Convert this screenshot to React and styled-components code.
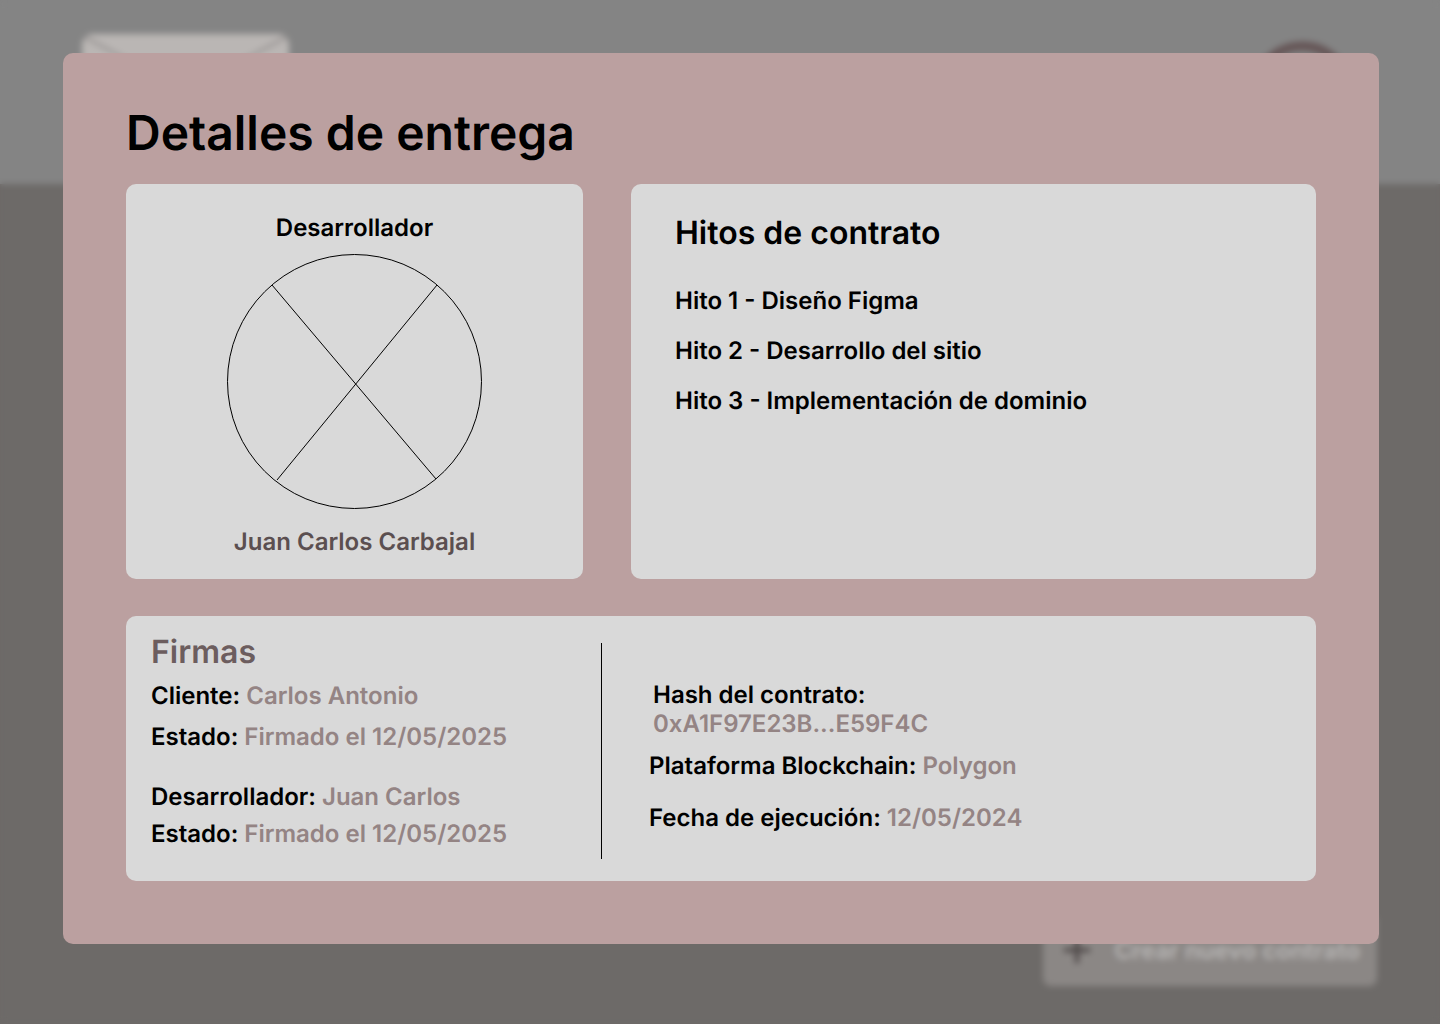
import React from "react";
import styled, { createGlobalStyle } from "styled-components";

const GlobalStyle = createGlobalStyle`
  *, *::before, *::after {
    box-sizing: border-box;
  }
  body {
    margin: 0;
    background: #6d6a68;
    color: #000;
    font-family: Inter, "Liberation Sans", sans-serif;
    font-size: 24px;
    font-weight: 600;
    line-height: 29px;
    text-rendering: geometricPrecision;
  }
  h1, h2, p, ul, dl, dd {
    margin: 0;
    padding: 0;
    font-weight: inherit;
  }
`;

const Screen = styled.div`
  position: relative;
  min-height: 100vh;
`;

/* Page behind the dialog */
const Page = styled.div`
  position: absolute;
  inset: 0;
  display: flex;
  flex-direction: column;
  background: #6d6a68;
`;

const Header = styled.header`
  display: flex;
  justify-content: space-between;
  align-items: center;
  height: 184px;
  padding: 0 80px 0 82px;
  background: #848484;
`;

const PageBody = styled.main`
  flex: 1;
  display: flex;
  justify-content: flex-end;
  align-items: flex-end;
  padding: 38px 63px;
`;

const CreateButton = styled.button`
  display: flex;
  align-items: center;
  gap: 20px;
  height: 72px;
  padding: 0 17px;
  border: 0;
  border-radius: 8px;
  background: #8b8785;
  color: #b9b7b6;
  font: inherit;
  white-space: nowrap;
`;

const Scrim = styled.div`
  position: relative;
  min-height: 100vh;
  padding: 53px 61px 80px 63px;
  backdrop-filter: blur(3px);
`;

const Dialog = styled.section`
  padding: 51px 63px 63px;
  border-radius: 10px;
  background: #bba0a0;
`;

const Title = styled.h1`
  margin-bottom: 22px;
  font-size: 48px;
  line-height: 58px;
`;

const TopRow = styled.div`
  display: grid;
  grid-template-columns: 457fr 685fr;
  gap: 48px;
  margin-bottom: 37px;
`;

const Card = styled.div`
  border-radius: 10px;
  background: #d9d9d9;
`;

const DeveloperCard = styled(Card)`
  display: flex;
  flex-direction: column;
  align-items: center;
  padding: 29px 24px 23px;
`;

const DeveloperHeading = styled.h2`
  font-size: 24px;
  line-height: 29px;
`;

const Avatar = styled.svg`
  display: block;
  margin: 12px 0 18px;
`;

const DeveloperName = styled.p`
  color: #5b4f50;
`;

const MilestonesCard = styled(Card)`
  padding: 29px 44px;
`;

const SectionTitle = styled.h2`
  color: ${({ $muted }) => ($muted ? "#6c5d5e" : "#000")};
  font-size: 32px;
  line-height: 39px;
`;

const Milestones = styled.ul`
  display: flex;
  flex-direction: column;
  gap: 21px;
  margin-top: 34px;
  list-style: none;
`;

const DetailsCard = styled(Card)`
  display: grid;
  grid-template-columns: 475fr 1px 714fr;
`;

const Signatures = styled.div`
  padding: 16px 25px 33px;
`;

const Divider = styled.div`
  margin: 27px 0 22px;
  background: #000;
`;

const ContractData = styled.dl`
  display: flex;
  flex-direction: column;
  padding: 64px 25px 33px 47px;
`;

const Signature = styled.dl`
  display: flex;
  flex-direction: column;
  gap: ${({ $gap }) => $gap}px;
  margin-top: ${({ $top }) => $top}px;
`;

const Field = styled.div`
  display: flex;
  flex-direction: ${({ $stacked }) => ($stacked ? "column" : "row")};
  flex-wrap: wrap;
  column-gap: 6px;
  margin-top: ${({ $top = 0 }) => $top}px;
  padding-left: ${({ $stacked }) => ($stacked ? 4 : 0)}px;
`;

const Value = styled.dd`
  color: #948484;
`;

function DataField({ label, value, ...rest }) {
  return (
    <Field {...rest}>
      <dt>{label}</dt>
      <Value>{value}</Value>
    </Field>
  );
}

const milestones = [
  "Hito 1 - Diseño Figma",
  "Hito 2 - Desarrollo del sitio",
  "Hito 3 - Implementación de dominio",
];

export default function App() {
  return (
    <>
      <GlobalStyle />
      <Screen>
        <Page aria-hidden="true">
          <Header>
            <svg width="207" height="116" viewBox="0 0 207 116">
              <rect width="207" height="116" rx="10" fill="#bab6b4" />
              <path d="M3 3 204 113M204 3 3 113" stroke="#8e8a89" strokeWidth="2" />
            </svg>
            <svg width="116" height="104" viewBox="0 0 116 104" fill="none">
              <circle cx="58" cy="53" r="47" stroke="#655556" strokeWidth="9" />
            </svg>
          </Header>
          <PageBody>
            <CreateButton type="button" tabIndex={-1}>
              <svg width="34" height="34" viewBox="0 0 34 34" fill="none">
                <path d="M17 4v26M4 17h26" stroke="#4b4545" strokeWidth="4" />
              </svg>
              Crear nuevo contrato
            </CreateButton>
          </PageBody>
        </Page>

        <Scrim>
          <Dialog role="dialog" aria-modal="true" aria-labelledby="dialog-title">
            <Title id="dialog-title">Detalles de entrega</Title>
            <TopRow>
              <DeveloperCard>
                <DeveloperHeading>Desarrollador</DeveloperHeading>
                <Avatar
                  width="255"
                  height="255"
                  viewBox="0 0 255 255"
                  fill="none"
                  stroke="#000"
                  aria-hidden="true"
                >
                  <circle cx="127.5" cy="127.5" r="127" />
                  <path d="M45 31 209 225M210 31 50 226" />
                </Avatar>
                <DeveloperName>Juan Carlos Carbajal</DeveloperName>
              </DeveloperCard>
              <MilestonesCard>
                <SectionTitle>Hitos de contrato</SectionTitle>
                <Milestones>
                  {milestones.map((name) => (
                    <li key={name}>{name}</li>
                  ))}
                </Milestones>
              </MilestonesCard>
            </TopRow>
            <DetailsCard>
              <Signatures>
                <SectionTitle $muted>Firmas</SectionTitle>
                <Signature $top={10} $gap={12}>
                  <DataField label="Cliente:" value="Carlos Antonio" />
                  <DataField label="Estado:" value="Firmado el 12/05/2025" />
                </Signature>
                <Signature $top={31} $gap={8}>
                  <DataField label="Desarrollador:" value="Juan Carlos" />
                  <DataField label="Estado:" value="Firmado el 12/05/2025" />
                </Signature>
              </Signatures>
              <Divider />
              <ContractData>
                <DataField $stacked label="Hash del contrato:" value="0xA1F97E23B...E59F4C" />
                <DataField $top={13} label="Plataforma Blockchain:" value="Polygon" />
                <DataField $top={23} label="Fecha de ejecución:" value="12/05/2024" />
              </ContractData>
            </DetailsCard>
          </Dialog>
        </Scrim>
      </Screen>
    </>
  );
}
